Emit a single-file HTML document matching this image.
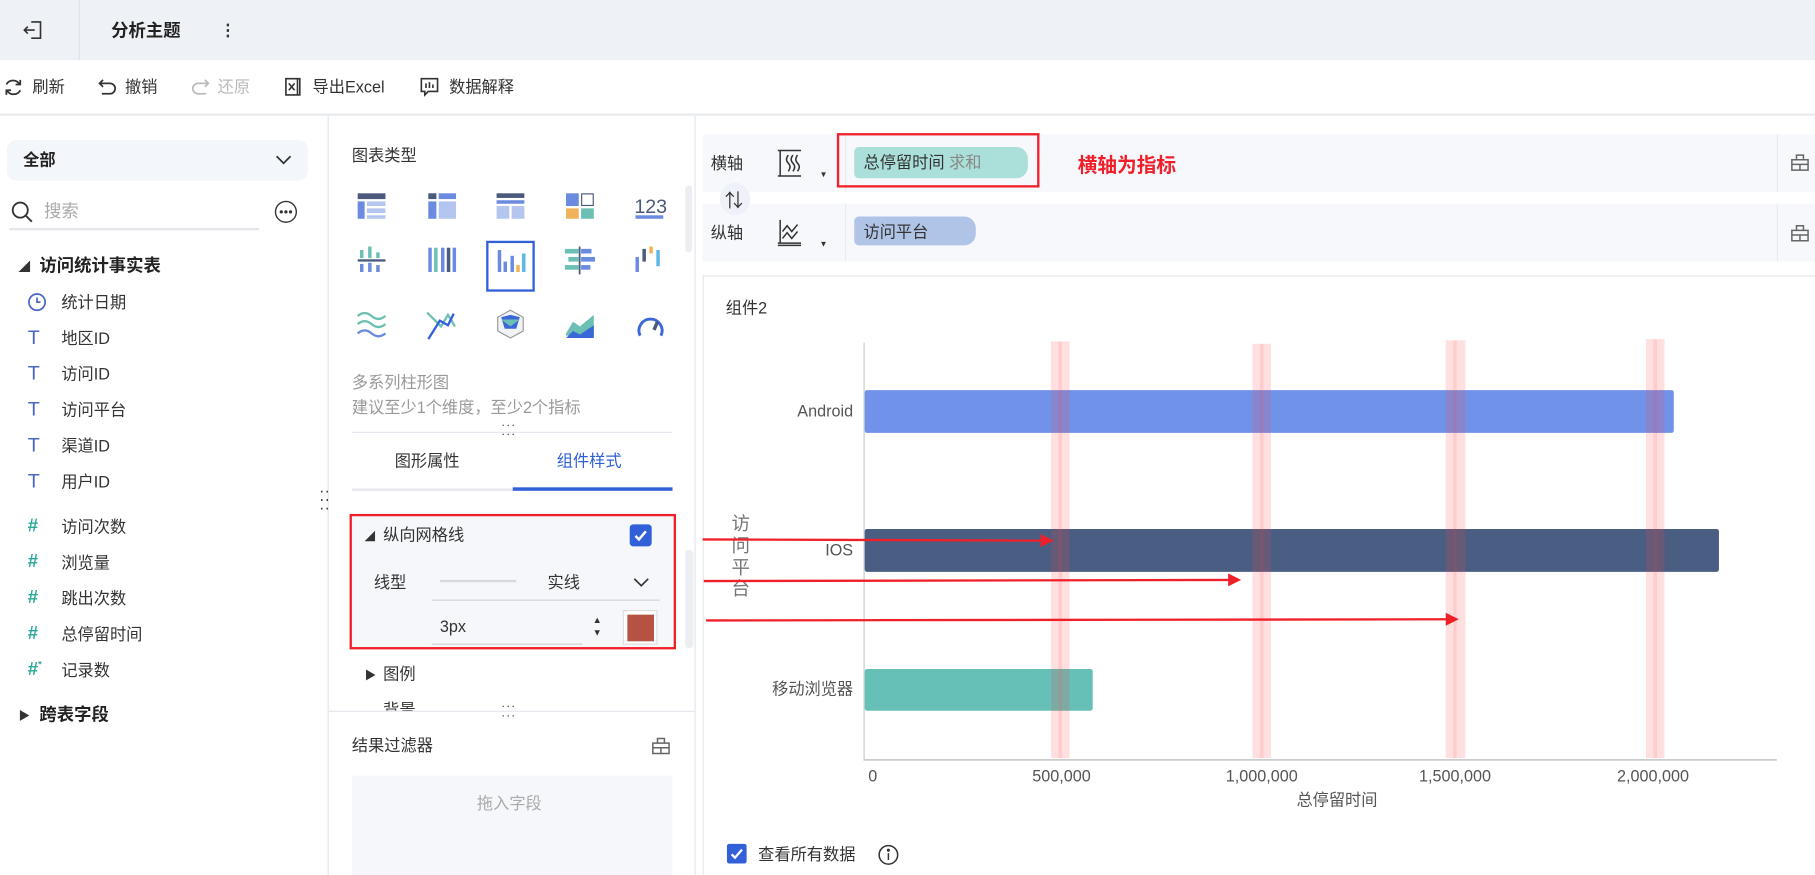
<!DOCTYPE html>
<html><head><meta charset="utf-8">
<style>
*{margin:0;padding:0;box-sizing:border-box}
html,body{width:1815px;height:875px;overflow:hidden;background:#fff}
#w{position:absolute;left:0;top:0;width:1568px;height:756px;transform:scale(1.15753);transform-origin:0 0;font-family:"Liberation Sans","Noto Sans CJK SC",sans-serif;font-size:14px;color:#333}
.a{position:absolute;white-space:nowrap}
.m{transform:translateY(-50%)}
.g{color:#999}
.T{color:#4a67c4;font-size:17px}
.H{color:#2aa89a;font-size:16px;font-weight:bold}
</style></head><body><div id="w">
<!-- top bar -->
<div class="a" style="left:0;top:0;width:1568px;height:52px;background:#eef1f6"></div>
<div class="a" style="left:68px;top:0;width:1px;height:52px;background:#dde1e8"></div>
<svg class="a" style="left:19px;top:16px" width="20" height="20" viewBox="0 0 20 20" fill="none" stroke="#333" stroke-width="1.4"><path d="M8 3h8v14H8M2 10h9M5 7l-3 3 3 3"/></svg>
<div class="a m" style="left:96px;top:26px;font-weight:bold;font-size:15px;color:#222">分析主题</div>
<div class="a m" style="left:190px;top:26px;font-weight:bold">⋮</div>
<!-- toolbar -->
<div class="a" style="left:0;top:98px;width:1568px;height:2px;background:#e8ebf0"></div>
<svg class="a" style="left:3px;top:67px" width="17" height="17" viewBox="0 0 17 17" fill="none" stroke="#333" stroke-width="1.5"><path d="M14 6A6.5 6.5 0 0 0 2.5 6M3 11a6.5 6.5 0 0 0 11.5 0M14.5 2v4h-4M2.5 15v-4h4"/></svg>
<div class="a m" style="left:28px;top:75px">刷新</div>
<svg class="a" style="left:84px;top:67px" width="18" height="17" viewBox="0 0 18 17" fill="none" stroke="#333" stroke-width="1.5"><path d="M5 2L2 5l3 3M2 5h9a4.5 4.5 0 0 1 0 9H4"/></svg>
<div class="a m" style="left:108px;top:75px">撤销</div>
<svg class="a" style="left:164px;top:67px" width="18" height="17" viewBox="0 0 18 17" fill="none" stroke="#bbb" stroke-width="1.5"><path d="M13 2l3 3-3 3M16 5H7a4.5 4.5 0 0 0 0 9h7"/></svg>
<div class="a m g" style="left:188px;top:75px;color:#bbb">还原</div>
<svg class="a" style="left:244px;top:66px" width="18" height="18" viewBox="0 0 18 18" fill="none" stroke="#333" stroke-width="1.4"><path d="M3 2h10v14H3zM13 2h2v14h-2M5.5 6l5 6M10.5 6l-5 6"/></svg>
<div class="a m" style="left:270px;top:75px">导出Excel</div>
<svg class="a" style="left:362px;top:66px" width="18" height="18" viewBox="0 0 18 18" fill="none" stroke="#333" stroke-width="1.4"><path d="M2 2h14v11H8l-3 3v-3H2zM6 6v4M9 5v5M12 7v3"/></svg>
<div class="a m" style="left:388px;top:75px">数据解释</div>
<!-- left panel -->
<div class="a" style="left:283px;top:100px;width:1px;height:656px;background:#e3e6ec"></div>
<div class="a" style="left:6px;top:121px;width:260px;height:35px;background:#f3f6fb;border-radius:8px"></div>
<div class="a m" style="left:20px;top:138px;font-weight:bold;color:#222">全部</div>
<svg class="a" style="left:237px;top:132px" width="16" height="12" viewBox="0 0 16 12" fill="none" stroke="#333" stroke-width="1.5"><path d="M2 3l6 6 6-6"/></svg>
<svg class="a" style="left:9px;top:173px" width="20" height="20" viewBox="0 0 20 20" fill="none" stroke="#333" stroke-width="1.6"><circle cx="8.5" cy="8.5" r="6.5"/><path d="M13.5 13.5l5 5"/></svg>
<div class="a m g" style="left:38px;top:182px;color:#aaa;font-size:15px">搜索</div>
<div class="a" style="left:8px;top:197px;width:216px;height:2px;background:#e3e6ec"></div>
<svg class="a" style="left:237px;top:173px" width="20" height="20" viewBox="0 0 20 20" fill="none" stroke="#333" stroke-width="1.2"><circle cx="10" cy="10" r="9"/><circle cx="6" cy="10" r=".8" fill="#333"/><circle cx="10" cy="10" r=".8" fill="#333"/><circle cx="14" cy="10" r=".8" fill="#333"/></svg>
<div class="a m" style="left:16px;top:229px;font-size:10px">◢</div>
<div class="a m" style="left:34px;top:229px;font-weight:bold;font-size:15px;color:#222">访问统计事实表</div>
<svg class="a" style="left:23px;top:252px" width="18" height="18" viewBox="0 0 18 18" fill="none" stroke="#4a67c4" stroke-width="1.5"><circle cx="9" cy="9" r="7"/><path d="M9 5v4h3"/></svg>
<div class="a m" style="left:53px;top:261px">统计日期</div>
<div class="a m T" style="left:24px;top:292px">T</div><div class="a m" style="left:53px;top:292px">地区ID</div>
<div class="a m T" style="left:24px;top:323px">T</div><div class="a m" style="left:53px;top:323px">访问ID</div>
<div class="a m T" style="left:24px;top:354px">T</div><div class="a m" style="left:53px;top:354px">访问平台</div>
<div class="a m T" style="left:24px;top:385px">T</div><div class="a m" style="left:53px;top:385px">渠道ID</div>
<div class="a m T" style="left:24px;top:416px">T</div><div class="a m" style="left:53px;top:416px">用户ID</div>
<div class="a m H" style="left:24px;top:455px">#</div><div class="a m" style="left:53px;top:455px">访问次数</div>
<div class="a m H" style="left:24px;top:486px">#</div><div class="a m" style="left:53px;top:486px">浏览量</div>
<div class="a m H" style="left:24px;top:517px">#</div><div class="a m" style="left:53px;top:517px">跳出次数</div>
<div class="a m H" style="left:24px;top:548px">#</div><div class="a m" style="left:53px;top:548px">总停留时间</div>
<div class="a m H" style="left:24px;top:579px">#<sup style="font-size:8px">*</sup></div><div class="a m" style="left:53px;top:579px">记录数</div>
<div class="a m" style="left:16px;top:617px;font-size:10px">▶</div>
<div class="a m" style="left:34px;top:617px;font-weight:bold;font-size:15px;color:#222">跨表字段</div>
<div class="a m" style="left:276px;top:433px;font-size:12px;letter-spacing:1px;line-height:7px;color:#333">⁚⁚<br>⁚⁚</div>
<!-- middle panel -->
<div class="a m" style="left:304px;top:134px">图表类型</div>
<div class="a" style="left:592px;top:160px;width:6px;height:58px;background:#eceef2;border-radius:3px"></div>
<svg class="a" style="left:300px;top:160px" width="290" height="140" viewBox="300 160 290 140">
<rect x="309" y="167" width="24" height="5" fill="#4b5a7c"/><rect x="309" y="174" width="6" height="15" fill="#6a8be0"/><rect x="317" y="174" width="16" height="4" fill="#b4c6f0"/><rect x="317" y="180" width="16" height="4" fill="#b4c6f0"/><rect x="317" y="186" width="16" height="3" fill="#b4c6f0"/>
<rect x="370" y="167" width="7" height="5" fill="#4b5a7c"/><rect x="379" y="167" width="15" height="5" fill="#6a8be0"/><rect x="370" y="174" width="7" height="15" fill="#6a8be0"/><rect x="379" y="174" width="15" height="15" fill="#b4c6f0"/>
<rect x="429" y="167" width="24" height="4" fill="#4b5a7c"/><rect x="429" y="173" width="24" height="3" fill="#6a8be0"/><rect x="429" y="178" width="11" height="11" fill="#b4c6f0"/><rect x="442" y="178" width="11" height="11" fill="#b4c6f0"/>
<rect x="489" y="167" width="11" height="11" fill="#6a8be0"/><rect x="502.5" y="167.5" width="10" height="10" fill="none" stroke="#4b5a7c"/><rect x="489" y="180" width="11" height="9" fill="#f0b25a"/><rect x="502" y="180" width="11" height="9" fill="#6cc0b3"/>
<text x="548" y="184" font-size="17" fill="#4b5a7c" font-family="Liberation Sans">123</text><rect x="549" y="186" width="24" height="3" fill="#6a8be0"/>
<rect x="311" y="216" width="3" height="7" fill="#6cc0b3"/><rect x="318" y="213" width="3" height="10" fill="#6cc0b3"/><rect x="325" y="218" width="3" height="5" fill="#6cc0b3"/><rect x="309" y="224" width="24" height="2" fill="#4b5a7c"/><rect x="311" y="228" width="3" height="7" fill="#6a8be0"/><rect x="318" y="227" width="3" height="8" fill="#6a8be0"/><rect x="325" y="229" width="3" height="6" fill="#6a8be0"/>
<g fill="#6a8be0"><rect x="370" y="214" width="3" height="21"/><rect x="375" y="214" width="3" height="21" fill="#6cc0b3"/><rect x="381" y="214" width="3" height="21"/><rect x="386" y="214" width="3" height="21" fill="#4b5a7c"/><rect x="391" y="214" width="3" height="21"/></g>
<rect x="421" y="209" width="40" height="42" fill="#fff" stroke="#3160d8" stroke-width="2"/>
<rect x="430" y="216" width="3" height="19" fill="#6a8be0"/><rect x="435" y="226" width="3" height="9" fill="#6a8be0"/><rect x="441" y="221" width="3" height="14" fill="#6a8be0"/><rect x="446" y="229" width="3" height="6" fill="#f0b25a"/><rect x="451" y="219" width="3" height="16" fill="#5bb8e8"/>
<rect x="500" y="213" width="1.5" height="24" fill="#4b5a7c"/><rect x="488" y="215" width="12" height="4" fill="#6cc0b3"/><rect x="502" y="215" width="9" height="4" fill="#6a8be0"/><rect x="491" y="222" width="9" height="4" fill="#6cc0b3"/><rect x="502" y="222" width="12" height="4" fill="#6a8be0"/><rect x="488" y="229" width="12" height="4" fill="#6cc0b3"/><rect x="502" y="229" width="8" height="4" fill="#6a8be0"/>
<rect x="549" y="222" width="3" height="13" fill="#6a8be0"/><rect x="555" y="215" width="3" height="11" fill="#4b5a7c"/><rect x="561" y="213" width="3" height="6" fill="#f0b25a"/><rect x="567" y="216" width="3" height="14" fill="#5bb8e8"/>
<path d="M309 273q6-5 12 0t12 0M309 280q6-5 12 0t12 0" stroke="#6cc0b3" stroke-width="2" fill="none"/><path d="M309 288q6-5 12 0t12 0" stroke="#6a8be0" stroke-width="2" fill="none"/>
<path d="M369 270l12 12 6-10 6 10" stroke="#6cc0b3" stroke-width="2" fill="none"/><path d="M370 293l10-16 7 4 5-10" stroke="#3160d8" stroke-width="2" fill="none"/>
<path d="M441 268l11 6v12l-11 6-11-6v-12z" fill="#f0f2f6" stroke="#999"/><path d="M433 274l8-2 8 2-3 10h-10z" fill="#3b68d8"/><path d="M433 276l8 6 8-6" fill="#6cc0b3"/>
<path d="M489 288l6-10 6 4 12-10v18h-24z" fill="#6cc0b3"/><path d="M489 292l6-6 6 3 12-8v11h-24z" fill="#3b68d8"/>
<path d="M553 290a10 10 0 1 1 18 0" stroke="#3b68d8" stroke-width="2.5" fill="none"/><path d="M568 278l-3 7" stroke="#4b5a7c" stroke-width="3"/>
</svg>
<div class="a m g" style="left:304px;top:330px">多系列柱形图</div>
<div class="a m g" style="left:304px;top:352px">建议至少1个维度，至少2个指标</div>
<div class="a" style="left:304px;top:373px;width:277px;height:1px;background:#e3e6ec"></div>
<div class="a" style="left:433px;top:364px;font-size:10px;letter-spacing:1px;line-height:8px">···<br>···</div>
<div class="a m" style="left:341px;top:398px">图形属性</div>
<div class="a m" style="left:481px;top:398px;color:#3160d8">组件样式</div>
<div class="a" style="left:304px;top:422px;width:139px;height:2px;background:#e6e8ed"></div>
<div class="a" style="left:443px;top:421px;width:138px;height:3px;background:#3160d8"></div>
<div class="a" style="left:302px;top:444px;width:282px;height:117px;background:#f5f7fb;border:2px solid #f0202a"></div>
<div class="a m" style="left:315px;top:463px;font-size:9px">◢</div>
<div class="a m" style="left:331px;top:462px">纵向网格线</div>
<div class="a" style="left:544px;top:453px;width:19px;height:19px;background:#3160d8;border-radius:3px"></div>
<svg class="a" style="left:544px;top:453px" width="19" height="19"><path d="M5 10l3 3 6-7" stroke="#fff" stroke-width="2.2" fill="none"/></svg>
<div class="a m" style="left:323px;top:503px">线型</div>
<div class="a" style="left:380px;top:501px;width:66px;height:2px;background:#d6d9df"></div>
<div class="a m" style="left:473px;top:503px">实线</div>
<svg class="a" style="left:546px;top:498px" width="16" height="10" viewBox="0 0 16 10" fill="none" stroke="#333" stroke-width="1.4"><path d="M2 2l6 6 6-6"/></svg>
<div class="a" style="left:373px;top:518px;width:197px;height:1px;background:#cfd3da"></div>
<div class="a m" style="left:380px;top:541px">3px</div>
<div class="a" style="left:512px;top:530px;font-size:8px;line-height:11px">▲<br>▼</div>
<div class="a" style="left:373px;top:556px;width:130px;height:1px;background:#cfd3da"></div>
<div class="a" style="left:538px;top:527px;width:30px;height:30px;background:#fff;border:1px solid #ddd"></div>
<div class="a" style="left:542px;top:531px;width:23px;height:23px;background:#b55242"></div>
<div class="a" style="left:592px;top:475px;width:7px;height:85px;background:#eceef2;border-radius:3px"></div>
<div class="a m" style="left:315px;top:582px;font-size:10px">▶</div>
<div class="a m" style="left:331px;top:582px">图例</div>
<div class="a" style="left:331px;top:606px;width:40px;height:8px;overflow:hidden;font-size:14px;line-height:14px">背景</div>
<div class="a" style="left:284px;top:614px;width:316px;height:1px;background:#e3e6ec"></div>
<div class="a" style="left:433px;top:607px;font-size:10px;letter-spacing:1px;line-height:8px">···<br>···</div>
<div class="a m" style="left:304px;top:644px">结果过滤器</div>
<svg class="a" style="left:562px;top:635px" width="18" height="18" viewBox="0 0 18 18" fill="none" stroke="#666" stroke-width="1.3"><path d="M2 7h14v9H2zM6 7V3h6v4M2 11h14M9 11v5"/></svg>
<div class="a" style="left:304px;top:670px;width:277px;height:86px;background:#f6f7fb"></div>
<div class="a m" style="left:412px;top:694px;color:#aaa">拖入字段</div>
<!-- right area -->
<div class="a" style="left:600px;top:100px;width:1px;height:656px;background:#e3e6ec"></div>
<div class="a" style="left:607px;top:116px;width:961px;height:50px;background:#f7f8fc"></div>
<div class="a" style="left:607px;top:176px;width:961px;height:50px;background:#f7f8fc"></div>
<div class="a" style="left:730px;top:116px;width:1px;height:50px;background:#e8ebf0"></div>
<div class="a" style="left:730px;top:176px;width:1px;height:50px;background:#e8ebf0"></div>
<div class="a" style="left:1535px;top:116px;width:1px;height:50px;background:#e8ebf0"></div>
<div class="a" style="left:1535px;top:176px;width:1px;height:50px;background:#e8ebf0"></div>
<div class="a m" style="left:614px;top:141px">横轴</div>
<div class="a m" style="left:614px;top:201px">纵轴</div>
<svg class="a" style="left:670px;top:128px" width="26" height="26" viewBox="0 0 26 26" fill="none" stroke="#333" stroke-width="1.3"><path d="M2 2h20M2 24h20M4 2v22M11 6q-3 4 0 7t0 7M15 6q-3 4 0 7t0 7M19 6q-3 4 0 7t0 7"/></svg>
<svg class="a" style="left:670px;top:188px" width="26" height="26" viewBox="0 0 26 26" fill="none" stroke="#333" stroke-width="1.3"><path d="M4 2v20M2 22h20M2 24h20M6 12l4-5 4 5 5-6M6 18l4-5 4 5 5-6"/></svg>
<div class="a" style="left:708px;top:148px;font-size:7px">▼</div>
<div class="a" style="left:708px;top:208px;font-size:7px">▼</div>
<div class="a" style="left:622px;top:158px;width:26px;height:28px;border-radius:13px;background:#eef1f7"></div>
<div class="a m" style="left:626px;top:172px;font-size:16px">⇅</div>
<div class="a" style="left:738px;top:127px;width:150px;height:27px;background:#abdfd9;border-radius:4px 10px 10px 4px"></div>
<div class="a m" style="left:746px;top:140px">总停留时间 <span class="g" style="color:#888">求和</span></div>
<div class="a" style="left:723px;top:115px;width:175px;height:47px;border:2px solid #f0202a"></div>
<div class="a m" style="left:931px;top:141px;color:#f0202a;font-size:17px;font-weight:bold">横轴为指标</div>
<div class="a" style="left:738px;top:187px;width:105px;height:25px;background:#b0c4e8;border-radius:4px 10px 10px 4px"></div>
<div class="a m" style="left:746px;top:200px">访问平台</div>
<svg class="a" style="left:1546px;top:131px" width="18" height="18" viewBox="0 0 18 18" fill="none" stroke="#666" stroke-width="1.3"><path d="M2 7h14v9H2zM6 7V3h6v4M2 11h14M9 11v5"/></svg>
<svg class="a" style="left:1546px;top:192px" width="18" height="18" viewBox="0 0 18 18" fill="none" stroke="#666" stroke-width="1.3"><path d="M2 7h14v9H2zM6 7V3h6v4M2 11h14M9 11v5"/></svg>
<div class="a" style="left:607px;top:238px;width:961px;height:1px;background:#e3e6ec"></div>
<div class="a" style="left:607px;top:238px;width:1px;height:518px;background:#e3e6ec"></div>
<div class="a m" style="left:627px;top:266px">组件2</div>
<svg class="a" style="left:600px;top:280px" width="968" height="430" viewBox="600 280 968 430" font-family="Liberation Sans,Noto Sans CJK SC,sans-serif">
<line x1="746.5" y1="296" x2="746.5" y2="656" stroke="#ccc"/>
<line x1="746" y1="656.5" x2="1535" y2="656.5" stroke="#ccc" stroke-width="1.5"/>
<rect x="747" y="337" width="699" height="37" rx="2" fill="#7093e9"/>
<rect x="747" y="457" width="738" height="37" rx="2" fill="#4a5e83"/>
<rect x="747" y="578" width="197" height="36" rx="2" fill="#66c0b7"/>
<g fill="#ff4040" fill-opacity="0.17"><rect x="908" y="295" width="16" height="360"/><rect x="1082" y="297" width="16" height="358"/><rect x="1249" y="294" width="17" height="361"/><rect x="1422" y="293" width="16" height="362"/></g>
<g stroke="#ff4040" stroke-opacity="0.12" stroke-width="3"><line x1="916" y1="295" x2="916" y2="655"/><line x1="1090" y1="297" x2="1090" y2="655"/><line x1="1257" y1="294" x2="1257" y2="655"/><line x1="1430" y1="293" x2="1430" y2="655"/></g>
<g font-size="14" fill="#555" text-anchor="end"><text x="737" y="360">Android</text><text x="737" y="480">IOS</text><text x="737" y="600">移动浏览器</text></g>
<g font-size="14" fill="#555" text-anchor="middle"><text x="754" y="675">0</text><text x="917" y="675">500,000</text><text x="1090" y="675">1,000,000</text><text x="1257" y="675">1,500,000</text><text x="1428" y="675">2,000,000</text><text x="1155" y="696">总停留时间</text></g>
<g font-size="16" fill="#777" text-anchor="middle"><text x="640" y="458">访</text><text x="640" y="477">问</text><text x="640" y="496">平</text><text x="640" y="514">台</text></g>
<g stroke="#f0202a" stroke-width="2" fill="#f0202a"><line x1="607" y1="466" x2="902" y2="467"/><path d="M900 463l8 4-8 4z"/><line x1="608" y1="502" x2="1064" y2="501"/><path d="M1062 497l8 4-8 4z"/><line x1="610" y1="536" x2="1252" y2="535"/><path d="M1250 531l8 4-8 4z"/></g>
</svg>
<div class="a" style="left:628px;top:729px;width:17px;height:17px;background:#3160d8;border-radius:2px"></div>
<svg class="a" style="left:628px;top:729px" width="17" height="17"><path d="M4 9l3 3 6-7" stroke="#fff" stroke-width="2" fill="none"/></svg>
<div class="a m" style="left:655px;top:738px">查看所有数据</div>
<svg class="a" style="left:758px;top:729px" width="19" height="19" viewBox="0 0 19 19" fill="none" stroke="#333" stroke-width="1.3"><circle cx="9.5" cy="9.5" r="8"/><path d="M9.5 8v6"/><circle cx="9.5" cy="5.5" r=".7" fill="#333"/></svg>
</div></body></html>
